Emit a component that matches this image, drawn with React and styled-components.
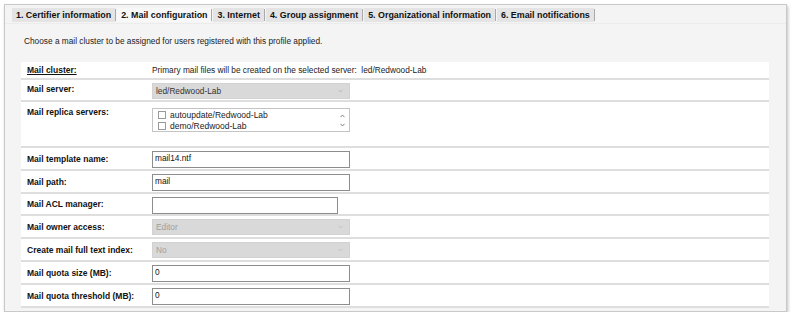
import React from "react";
import styled, { createGlobalStyle } from "styled-components";

const Global = createGlobalStyle`
  html, body { margin: 0; padding: 0; background: #ffffff; }
  body { font-family: "Liberation Sans", Arial, sans-serif; color: #222; }
`;

const Page = styled.div`
  padding: 4px 5px 0 4px;
  width: 792px;
  box-sizing: border-box;
`;

const Panel = styled.div`
  height: 308px;
  box-sizing: border-box;
  border: 1px solid #c9c9c9;
  background: #f4f4f4;
  box-shadow: 1px 2px 3px rgba(0, 0, 0, 0.25);
  display: flex;
  flex-direction: column;
`;

const TabBar = styled.div`
  display: flex;
  align-items: stretch;
  height: 14px;
  margin-top: 3px;
  padding-left: 7px;
  border-bottom: 1px solid #ececec;
  padding-bottom: 1px;
`;

const Tab = styled.div`
  display: flex;
  align-items: center;
  padding: 0 4px 0 4px;
  margin-right: 2px;
  font-size: 8.9px;
  font-weight: bold;
  color: #111;
  background: ${(p) => (p.$active ? "#f7f7f7" : "#e4e4e4")};
  box-shadow: 2px 0 0 -1px #a9a9a9;
  white-space: nowrap;
`;

const Intro = styled.div`
  font-size: 8.3px;
  color: #222;
  padding: 12px 0 0 19px;
  height: 38px;
  box-sizing: border-box;
`;

const Table = styled.div`
  margin: 0 17px 0 16px;
  background: #ffffff;
  display: flex;
  flex-direction: column;
`;

const Row = styled.div`
  display: grid;
  grid-template-columns: 131px 1fr;
  height: ${(p) => p.$h}px;
  box-sizing: border-box;
  border-bottom: 2px solid #dedede;
`;

const Label = styled.div`
  font-size: 8.5px;
  font-weight: bold;
  color: #111;
  padding: ${(p) => p.$pt ?? 4}px 0 0 6px;
  text-decoration: ${(p) => (p.$underline ? "underline" : "none")};
`;

const Value = styled.div`
  padding-top: ${(p) => p.$pt ?? 3}px;
  font-size: 8.3px;
  color: #222;
`;

const TextBox = styled.div`
  width: ${(p) => p.$w ?? 198}px;
  height: 17px;
  box-sizing: border-box;
  border: 1px solid #8d8d8d;
  background: #fff;
  font-size: 8.3px;
  padding: 1px 0 0 2px;
  color: #111;
`;

const SelectBox = styled.div`
  width: 198px;
  height: 16px;
  box-sizing: border-box;
  background: #d9d9d9;
  border: 1px solid #d2d2d2;
  display: flex;
  align-items: center;
  justify-content: space-between;
  padding: 0 6px 0 3px;
  font-size: 8.3px;
  color: ${(p) => (p.$dim ? "#9e9e9e" : "#333")};
`;

const ListBox = styled.div`
  width: 198px;
  height: 24px;
  box-sizing: border-box;
  border: 1px solid #c4c4c4;
  background: #fff;
  display: flex;
  justify-content: space-between;
  padding: 1px 4px 0 5px;
`;

const Items = styled.div`
  display: flex;
  flex-direction: column;
`;

const Item = styled.div`
  display: flex;
  align-items: center;
  height: 10.5px;
  font-size: 8.5px;
  color: #222;
`;

const Check = styled.span`
  width: 8px;
  height: 8px;
  box-sizing: border-box;
  border: 1px solid #9a9a9a;
  background: #fff;
  margin-right: 4px;
`;

const Arrows = styled.div`
  display: flex;
  flex-direction: column;
  justify-content: space-around;
  padding: 2px 0;
`;

const Chevron = ({ up, color = "#aaa" }) => (
  <svg width="5" height="4" viewBox="0 0 5 4">
    <path
      d={up ? "M0.5 3.2 L2.5 1 L4.5 3.2" : "M0.5 0.8 L2.5 3 L4.5 0.8"}
      fill="none"
      stroke={color}
      strokeWidth="0.9"
    />
  </svg>
);

const tabs = [
  "1. Certifier information",
  "2. Mail configuration",
  "3. Internet",
  "4. Group assignment",
  "5. Organizational information",
  "6. Email notifications",
];

export default function App() {
  return (
    <>
      <Global />
      <Page>
        <Panel>
          <TabBar>
            {tabs.map((t, i) => (
              <Tab key={t} $active={i === 1}>
                {t}
              </Tab>
            ))}
          </TabBar>
          <Intro>
            Choose a mail cluster to be assigned for users registered with this profile applied.
          </Intro>
          <Table>
            <Row $h={18}>
              <Label $underline $pt={3}>Mail cluster:</Label>
              <Value $pt={3}>Primary mail files will be created on the selected server:&nbsp; led/Redwood-Lab</Value>
            </Row>
            <Row $h={22}>
              <Label>Mail server:</Label>
              <Value $pt={3}>
                <SelectBox>
                  <span>led/Redwood-Lab</span>
                  <Chevron color="#b5b5b5" />
                </SelectBox>
              </Value>
            </Row>
            <Row $h={46}>
              <Label $pt={5}>Mail replica servers:</Label>
              <Value $pt={6}>
                <ListBox>
                  <Items>
                    <Item><Check />autoupdate/Redwood-Lab</Item>
                    <Item><Check />demo/Redwood-Lab</Item>
                  </Items>
                  <Arrows>
                    <Chevron up color="#777" />
                    <Chevron color="#777" />
                  </Arrows>
                </ListBox>
              </Value>
            </Row>
            <Row $h={23}>
              <Label $pt={6}>Mail template name:</Label>
              <Value><TextBox>mail14.ntf</TextBox></Value>
            </Row>
            <Row $h={23}>
              <Label $pt={6}>Mail path:</Label>
              <Value><TextBox>mail</TextBox></Value>
            </Row>
            <Row $h={22}>
              <Label $pt={5}>Mail ACL manager:</Label>
              <Value><TextBox $w={186} /></Value>
            </Row>
            <Row $h={23}>
              <Label $pt={6}>Mail owner access:</Label>
              <Value $pt={3}>
                <SelectBox $dim>
                  <span>Editor</span>
                  <Chevron color="#c0c0c0" />
                </SelectBox>
              </Value>
            </Row>
            <Row $h={23}>
              <Label $pt={6}>Create mail full text index:</Label>
              <Value $pt={3}>
                <SelectBox $dim>
                  <span>No</span>
                  <Chevron color="#c0c0c0" />
                </SelectBox>
              </Value>
            </Row>
            <Row $h={23}>
              <Label $pt={6}>Mail quota size (MB):</Label>
              <Value><TextBox>0</TextBox></Value>
            </Row>
            <Row $h={23}>
              <Label $pt={6}>Mail quota threshold (MB):</Label>
              <Value><TextBox>0</TextBox></Value>
            </Row>
          </Table>
        </Panel>
      </Page>
    </>
  );
}
